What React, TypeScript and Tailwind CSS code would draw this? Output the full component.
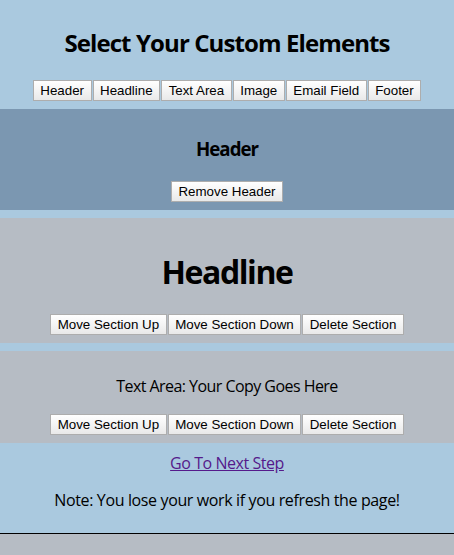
const heading = { fontFamily: '"Open Sans", "Noto Sans", sans-serif' };
const btnFont = { fontFamily: '"Liberation Sans", Arial, sans-serif' };

function Btn({ children }: { children: React.ReactNode }) {
  return (
    <button
      type="button"
      style={btnFont}
      className="h-[21px] px-[6.5px] border border-[#adadad] bg-gradient-to-b from-white to-[#e9e9e9] text-[13.333px] leading-[19px] text-black"
    >
      {children}
    </button>
  );
}

function SectionButtons() {
  return (
    <div className="flex justify-center gap-[1px]">
      <Btn>Move Section Up</Btn>
      <Btn>Move Section Down</Btn>
      <Btn>Delete Section</Btn>
    </div>
  );
}

export default function App() {
  return (
    <div style={heading} className="min-h-[555px] bg-[#b6bcc4] text-black">
      <div className="bg-[#aac9df]">
        <div className="pt-[27px] pb-[8px] text-center">
          <h2 className="text-[24px] leading-[32px] font-bold tracking-[-0.9px]">
            Select Your Custom Elements
          </h2>
          <div className="mt-[21px] flex justify-center gap-[1px]">
            <Btn>Header</Btn>
            <Btn>Headline</Btn>
            <Btn>Text Area</Btn>
            <Btn>Image</Btn>
            <Btn>Email Field</Btn>
            <Btn>Footer</Btn>
          </div>
        </div>

        <div className="bg-[#7b97b1] pt-[27px] pb-[8px] text-center">
          <h3 className="text-[18.7px] leading-[25px] font-bold tracking-[-1px]">Header</h3>
          <div className="mt-[20px] flex justify-center">
            <Btn>Remove Header</Btn>
          </div>
        </div>

        <div className="mt-[8px] bg-[#b6bcc4] pt-[32px] pb-[8px] text-center">
          <h1 className="text-[32px] leading-[43px] font-bold tracking-[-1.4px]">Headline</h1>
          <div className="mt-[21px]">
            <SectionButtons />
          </div>
        </div>

        <div className="mt-[8px] bg-[#b6bcc4] pt-[25px] pb-[8px] text-center">
          <p className="text-[16px] leading-[21px] tracking-[-0.55px]">
            Text Area: Your Copy Goes Here
          </p>
          <div className="mt-[17px]">
            <SectionButtons />
          </div>
        </div>

        <div className="pt-[8px] pb-[22px] text-center border-b border-black">
          <a
            href="#"
            className="text-[16px] leading-[21px] text-[#551a8b] underline tracking-[-0.45px]"
          >
            Go To Next Step
          </a>
          <p className="mt-[15px] text-[16px] leading-[21px] tracking-[-0.37px]">
            Note: You lose your work if you refresh the page!
          </p>
        </div>
      </div>
    </div>
  );
}
